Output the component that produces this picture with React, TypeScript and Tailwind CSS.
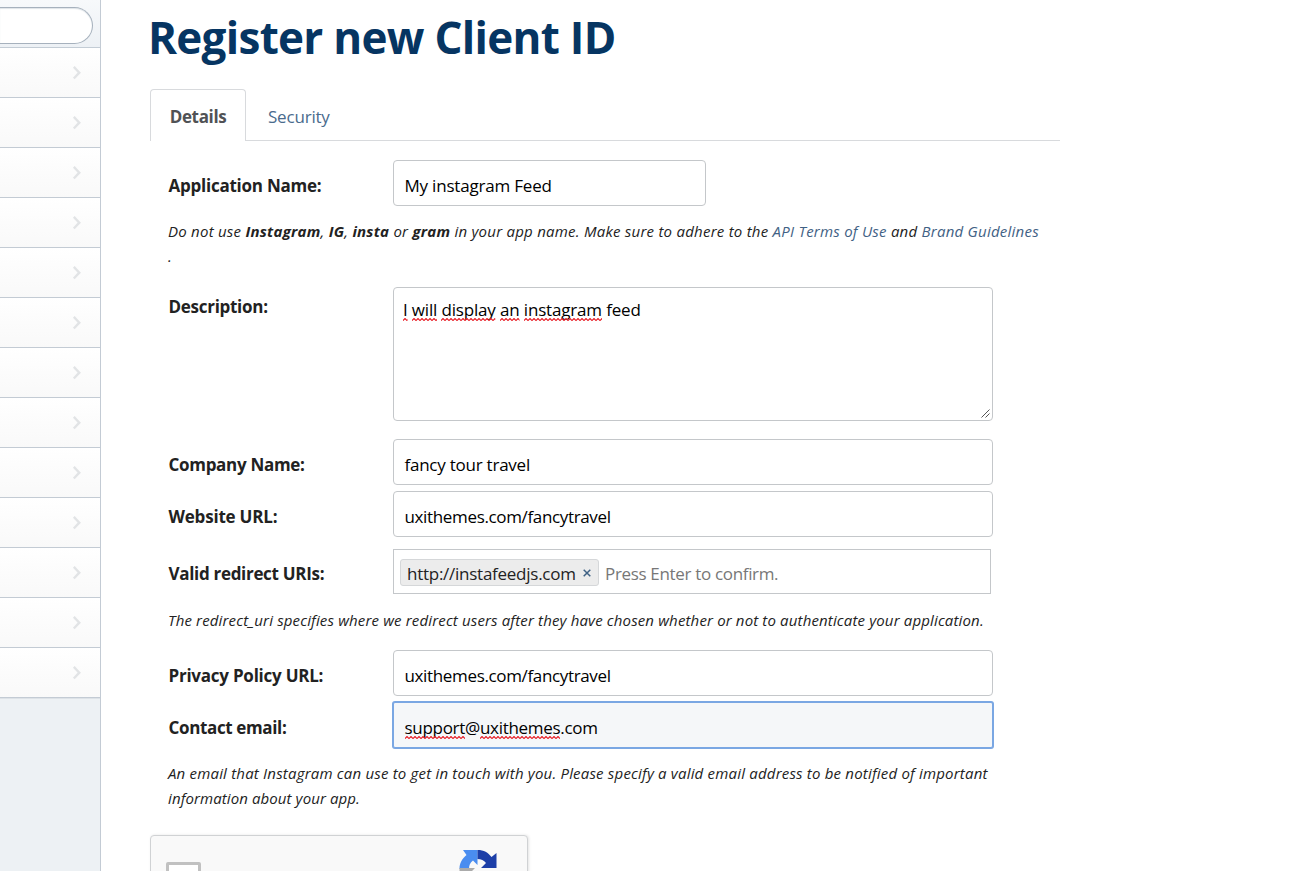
import type { ReactNode } from "react";

const inputBase = "flex items-center rounded-[4px] border border-[#c4c7ca] bg-white pl-[10.5px] pt-[5px] text-black h-[46px]";

function Misspelled({ id, children }: { id: string; children: ReactNode }) {
  return (
    <span className="relative inline-block">
      {children}
      <svg className="absolute bottom-px left-0 h-[3px] w-full" aria-hidden="true">
        <defs>
          <pattern id={id} width="4" height="3" patternUnits="userSpaceOnUse">
            <path d="M-1 1.5 L0 2.5 L2 0.5 L4 2.5 L5 1.5" fill="none" stroke="#e8232b" strokeWidth="1.2" />
          </pattern>
        </defs>
        <rect width="100%" height="3" fill={`url(#${id})`} />
      </svg>
    </span>
  );
}

function Sidebar() {
  return (
    <aside className="flex h-[871px] w-[101px] shrink-0 flex-col border-r border-[#c3cbd4] bg-[#edf1f4]">
      <div className="h-[48px] shrink-0 border-b border-[#c3ccd5] bg-linear-to-b from-[#f7f9fb] to-[#edf1f5] pt-[7px]">
        <div className="h-[37px] w-[93px] rounded-r-full border border-l-0 border-[#a6b1bd] bg-white shadow-[inset_0_1px_1px_#dfe4e8]" />
      </div>
      {Array.from({ length: 13 }, (_, i) => (
        <div
          key={i}
          className="flex h-[50px] shrink-0 items-center justify-end border-b border-[#c3cbd4] bg-linear-to-b from-white to-[#f9f9f9] pr-[18px]"
        >
          <svg width="10" height="14" viewBox="0 0 10 14" fill="none" stroke="#e2e4e6" strokeWidth="2.4">
            <path d="M1.8 0.9 L7.3 6.7 L1.8 12.5" />
          </svg>
        </div>
      ))}
      <div className="h-px bg-[#dde2e7]" />
    </aside>
  );
}

function Field({ label, className, children }: { label: ReactNode; className: string; children: ReactNode }) {
  return (
    <div className={`flex ${className}`}>
      <div className="w-[225px] shrink-0 pt-[13px] pl-[0.5px] text-[17px] leading-[25px] font-bold whitespace-nowrap text-[#222]">{label}</div>
      {children}
    </div>
  );
}

export default function App() {
  return (
    <div className="flex h-[871px] w-[1305px] overflow-hidden bg-white font-['Open_Sans','Noto_Sans',sans-serif] text-[17px]">
      <Sidebar />
      <main className="flex w-[959px] flex-col pl-[49px]">
        <h1 className="mt-[10px] -ml-[2px] h-[54px] text-[44px] leading-[54px] font-bold whitespace-nowrap text-[#063562]">
          <span className="tracking-[-0.71px]">Register new Client ID</span>
        </h1>
        <nav className="mt-[25px] flex h-[52px] shrink-0">
          <div className="flex w-[96px] items-center justify-center rounded-t-[4px] border border-b-0 border-[#d8dadd] pt-[3px] font-bold text-[#505255]">
            <span className="tracking-[-0.35px]">Details</span>
          </div>
          <div className="flex flex-1 items-center border-b border-[#d8dadd] pt-[4px] pl-[22px] text-[#4a6b8d]">
            <span className="tracking-[-0.2px]">Security</span>
          </div>
        </nav>
        <form className="flex flex-col pl-[18px] text-[#222]">
          <Field className="mt-[19px] h-[46px]" label={<span className="tracking-[-0.24px]">Application Name:</span>}>
            <div className={`${inputBase} w-[313px]`}><span className="tracking-[-0.2px]">My instagram Feed</span></div>
          </Field>
          <p className="mt-[13px] h-[50px] text-[15px] leading-[25px] whitespace-nowrap italic">
            <span className="tracking-[0.24px]">Do not use <b>Instagram</b>, <b>IG</b>, <b>insta</b> or <b>gram</b> in your app name. Make sure to adhere to the <a className="text-[#3f6184]">API Terms of Use</a> and <a className="text-[#3f6184]">Brand Guidelines</a></span>
            <br />.
          </p>
          <Field className="mt-[18px] h-[134px]" label={<span className="relative -top-[6px] tracking-[-0.28px]">Description:</span>}>
            <div className="relative h-[134px] w-[600px] rounded-[4px] border border-[#c4c7ca] pt-[10px] pl-[9px] leading-[24px] text-black">
              <span className="tracking-[-0.17px]"><Misspelled id="w1">I</Misspelled> <Misspelled id="w2">will</Misspelled> <Misspelled id="w3">display</Misspelled> <Misspelled id="w4">an</Misspelled> <Misspelled id="w5">instagram</Misspelled> feed</span>
              <svg className="absolute right-[2px] bottom-[2px]" width="9" height="9" viewBox="0 0 9 9" stroke="#555" strokeWidth="1">
                <path d="M0.5 8.5 L8.5 0.5 M4.5 8.5 L8.5 4.5" />
              </svg>
            </div>
          </Field>
          <Field className="mt-[18px] h-[46px]" label={<span className="tracking-[-0.3px]">Company Name:</span>}>
            <div className={`${inputBase} w-[600px]`}><span className="tracking-[-0.24px]">fancy tour travel</span></div>
          </Field>
          <Field className="mt-[6px] h-[46px]" label={<span className="tracking-[-0.2px]">Website URL:</span>}>
            <div className={`${inputBase} w-[600px]`}><span className="tracking-[-0.35px]">uxithemes.com/fancytravel</span></div>
          </Field>
          <Field className="mt-[12px] h-[45px]" label={<span className="relative -top-px tracking-[-0.31px]">Valid redirect URIs:</span>}>
            <div className="flex h-[45px] w-[598px] items-center border border-[#c4c7ca] pt-[2px] pl-[6px]">
              <div className="flex h-[27px] w-[199px] items-center rounded-[3px] border border-[#d5d7d9] bg-[#ececec] pl-[6px] text-[#222]">
                <span className="w-[175px] pt-[2px] whitespace-nowrap tracking-[-0.26px]">http://instafeedjs.com</span>
                <svg width="8" height="8" viewBox="0 0 8 8" stroke="#3f6184" strokeWidth="1.5" className="ml-px">
                  <path d="M0.7 0.7 L7.3 7.3 M7.3 0.7 L0.7 7.3" />
                </svg>
              </div>
              <span className="ml-[6px] pt-[2px] tracking-[-0.33px] text-[#777]">Press Enter to confirm.</span>
            </div>
          </Field>
          <p className="mt-[14px] h-[25px] text-[15px] leading-[25px] whitespace-nowrap italic">
            <span className="tracking-[0.15px]">The redirect_uri specifies where we redirect users after they have chosen whether or not to authenticate your application.</span>
          </p>
          <Field className="mt-[17px] h-[46px]" label={<span className="tracking-[-0.24px]">Privacy Policy URL:</span>}>
            <div className={`${inputBase} w-[600px]`}><span className="tracking-[-0.35px]">uxithemes.com/fancytravel</span></div>
          </Field>
          <Field className="mt-[6px] h-[46px]" label={<span className="tracking-[-0.36px]">Contact email:</span>}>
            <div className="flex h-[46px] w-[600px] items-center rounded-[2px] border border-[#7aa7e3] bg-[#f5f7f9] pt-[5px] pl-[10.5px] text-black shadow-[0_0_0_1px_#7aa7e3]">
              <span className="tracking-[-0.3px]"><Misspelled id="w6">support</Misspelled>@<Misspelled id="w7">uxithemes</Misspelled>.com</span>
            </div>
          </Field>
          <p className="mt-[13px] h-[50px] text-[15px] leading-[25px] whitespace-nowrap italic">
            <span className="tracking-[0.195px]">An email that Instagram can use to get in touch with you. Please specify a valid email address to be notified of important</span>
            <br />
            <span className="tracking-[0.1px]">information about your app.</span>
          </p>
        </form>
        <div className="mt-[24px] flex h-[93px] w-[378px] shrink-0 items-start justify-between rounded-[4px] border border-[#d0d2d4] bg-[#f9f9f9] pr-[30px] pl-[15px] shadow-[1px_0_3px_#e4e4e4]">
          <div className="mt-[26px] h-[35px] w-[35px] rounded-[2px] border-[3px] border-[#c1c1c1] bg-white" />
          <svg className="mt-[13px]" width="38" height="38" viewBox="0 0 38 38">
            <path d="M18.5 1 H4 L7.5 6 C3 10 0.5 14 0.5 20 H10 C10 16 11 14 14 11.5 L18.5 16 Z" fill="#4a8df0" />
            <path d="M18.5 1 C25 1 29 3.5 32.5 8 L37.5 4 V19 H22 L27 14 C25 11.5 22 10 18.5 10 Z" fill="#1d3fa8" />
            <path d="M0.5 19 V34 L5 30 C9 35 13 37.5 19 37.5 C26 37.5 30 34 33 30 L26 24 C22 29 14 29 11 24 L16 19 Z" fill="#ababab" />
          </svg>
        </div>
      </main>
    </div>
  );
}
